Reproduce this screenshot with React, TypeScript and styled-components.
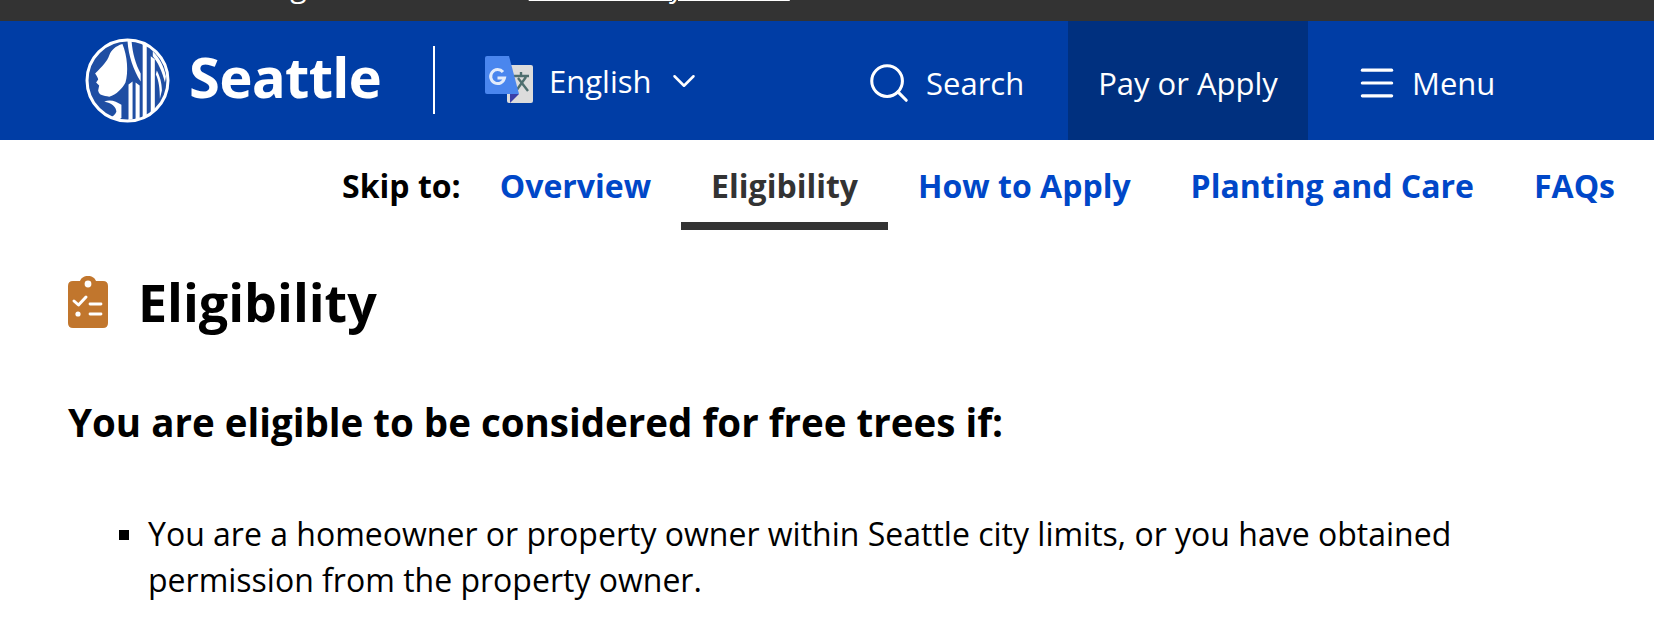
import React from 'react';
import styled, { createGlobalStyle } from 'styled-components';
import { Search, Menu, ChevronDown } from 'lucide-react';

const GlobalStyle = createGlobalStyle`
  html, body {
    margin: 0;
    padding: 0;
    background: #fff;
    overflow: hidden;
  }
  body {
    font-family: 'Open Sans', 'Noto Sans', sans-serif;
    color: #000;
  }
`;

const TopStrip = styled.div`
  height: 21px;
  background: #333;
  overflow: hidden;
  display: flex;
  align-items: flex-end;
  padding: 0 0 15px 194px;
  box-sizing: border-box;
  color: #fff;
  font-size: 30px;
  line-height: 40px;
  white-space: pre;
`;

const StripLink = styled.a`
  color: #fff;
  font-size: 28.5px;
  text-decoration: underline;
  text-decoration-thickness: 2px;
  text-underline-offset: 2px;
`;

const Header = styled.header`
  height: 119px;
  background: #003da5;
  display: flex;
  align-items: stretch;
  color: #fff;
`;

const Brand = styled.div`
  display: flex;
  align-items: center;
  padding-left: 85px;
  width: 435px;
  box-sizing: border-box;
`;

const BrandName = styled.span`
  font-family: 'Noto Sans', sans-serif;
  font-size: 56px;
  font-weight: 700;
  letter-spacing: -0.6px;
  margin-left: 19px;
  margin-top: -9px;
`;

const Divider = styled.span`
  width: 2px;
  height: 68px;
  background: #fff;
  margin-left: auto;
  margin-top: -2px;
`;

const Language = styled.div`
  display: flex;
  align-items: center;
  font-size: 31px;
  width: 435px;
  padding: 0 0 0 50px;
  box-sizing: border-box;
`;

const LanguageLabel = styled.span`
  margin-left: 16px;
  margin-right: 13px;
`;

const HeaderItem = styled.div`
  display: flex;
  align-items: center;
  font-size: 31px;
  padding-top: 5px;
  box-sizing: border-box;
`;

const SearchItem = styled(HeaderItem)`
  width: 198px;
  gap: 14px;
  margin-left: -4px;
`;

const PayItem = styled(HeaderItem)`
  width: 240px;
  justify-content: center;
  background: #00307f;
  margin-left: 4px;
`;

const MenuItem = styled(HeaderItem)`
  padding-left: 47px;
  gap: 13px;
`;

const SkipBar = styled.nav`
  height: 90px;
  display: flex;
  justify-content: flex-end;
  align-items: stretch;
  padding-right: 9px;
`;

const SkipLabel = styled.span`
  font-size: 32px;
  font-weight: 700;
  line-height: 91px;
  margin-right: 9px;
`;

const SkipLink = styled.a<{ $current?: boolean }>`
  display: block;
  font-size: 32px;
  font-weight: 700;
  padding: 0 30px;
  line-height: 91px;
  color: ${(p) => (p.$current ? '#333' : '#0047c8')};
  box-sizing: border-box;
  height: 90px;
  border-bottom: ${(p) => (p.$current ? '8px solid #333' : 'none')};
`;

const Content = styled.main`
  padding: 38px 0 0 68px;
`;

const TitleRow = styled.div`
  display: flex;
  align-items: center;
  gap: 30px;
`;

const Title = styled.h1`
  margin: 0;
  font-size: 52px;
  line-height: 68px;
  font-weight: 700;
`;

const Lead = styled.h2`
  margin: 61px 0 0;
  font-size: 38.5px;
  line-height: 50px;
  font-weight: 700;
`;

const Points = styled.ul`
  list-style: none;
  margin: 64px 0 0;
  padding: 0 0 0 80px;
  width: 1460px;
  box-sizing: border-box;
`;

const Point = styled.li`
  position: relative;
  font-size: 32px;
  line-height: 46px;

  &::before {
    content: '';
    position: absolute;
    left: -29px;
    top: 19px;
    width: 10px;
    height: 10px;
    background: #000;
  }
`;

const SealIcon = () => (
  <svg width="85" height="85" viewBox="0 0 84 84" aria-hidden="true">
    <circle cx="42" cy="42" r="40" fill="#1f4ea3" stroke="#fff" strokeWidth="3" />
    <path
      d="M37 6 C30 8 26 12 24 17 C22 23 17 28 10 35 C12 38 13 40 13 41 L11 44 L14 47 L13 52 C14 57 18 57 24 58 C31 56 37 50 40 44 C43 34 42 18 37 6 Z"
      fill="#fff"
    />
    <path d="M19 63 C26 64 31 68 31 73 C30 76 27 78 25 79 L33 81 L36 79 L36 66 C31 63 25 60 19 63 Z" fill="#fff" />
    <path d="M42 3 L46 3 C47 15 50 26 55 35 L55 43 C48 32 43 18 42 3 Z" fill="#fff" />
    <path d="M43 46 L47 43 L47 80 L43 81 Z M50 44 L54 47 L54 80 L50 80 Z" fill="#fff" />
    <path d="M57 6 L61 7 L61 78 L57 79 Z M65 18 L69 21 L69 72 L65 75 Z" fill="#fff" />
    <path d="M67 13 C74 20 78 28 80 38 L79 44 C76 32 72 24 67 18 Z M71 32 C74 38 76 44 76 52 L74 60 C74 50 73 42 70 36 Z" fill="#fff" />
  </svg>
);

const TranslateIcon = () => (
  <svg width="48" height="50" viewBox="0 0 48 50" aria-hidden="true">
    <rect x="22" y="9" width="26" height="38" rx="2" fill="#dcdcdc" />
    <path d="M29 20 L44 20 M36 16 L36 20 M31 35 L41 21 M33 22 L43 35" stroke="#4f6f6f" strokeWidth="2.4" fill="none" />
    <path d="M25 38 L34 38 L25 47 Z" fill="#3b3fa8" />
    <path d="M2 0 L24 0 L34 38 L2 38 Q0 38 0 36 L0 2 Q0 0 2 0 Z" fill="#4a86ee" />
    <path d="M18 16 A7 7 0 1 0 19.5 22 L12.5 22" stroke="#e3ecfb" strokeWidth="3" fill="none" />
  </svg>
);

const ClipboardIcon = () => (
  <svg width="40" height="52" viewBox="0 0 40 52" aria-hidden="true">
    <path
      d="M5 5 L12 5 C13 2 16 0 20 0 C24 0 27 2 28 5 L35 5 Q40 5 40 10 L40 47 Q40 52 35 52 L5 52 Q0 52 0 47 L0 10 Q0 5 5 5 Z"
      fill="#c1762d"
    />
    <circle cx="20" cy="8" r="3.4" fill="#fff" />
    <path d="M6 25 L10.5 29 L18 21" stroke="#fff" strokeWidth="3" fill="none" strokeLinecap="round" strokeLinejoin="round" />
    <path d="M22 28 L33 28 M22 38 L33 38" stroke="#fff" strokeWidth="2.8" strokeLinecap="round" />
    <circle cx="10" cy="38" r="2.6" fill="#fff" />
  </svg>
);

export default function App() {
  return (
    <>
      <GlobalStyle />
      <TopStrip>
        Reading the latest from <StripLink>Community Notices</StripLink>
      </TopStrip>
      <Header>
        <Brand>
          <SealIcon />
          <BrandName>Seattle</BrandName>
          <Divider />
        </Brand>
        <Language>
          <TranslateIcon />
          <LanguageLabel>English</LanguageLabel>
          <ChevronDown size={38} strokeWidth={1.6} />
        </Language>
        <SearchItem>
          <Search size={46} strokeWidth={1.6} />
          <span>Search</span>
        </SearchItem>
        <PayItem>Pay or Apply</PayItem>
        <MenuItem>
          <Menu size={44} strokeWidth={1.7} />
          <span>Menu</span>
        </MenuItem>
      </Header>
      <SkipBar>
        <SkipLabel>Skip to:</SkipLabel>
        <SkipLink>Overview</SkipLink>
        <SkipLink $current>Eligibility</SkipLink>
        <SkipLink>How to Apply</SkipLink>
        <SkipLink>Planting and Care</SkipLink>
        <SkipLink>FAQs</SkipLink>
      </SkipBar>
      <Content>
        <TitleRow>
          <ClipboardIcon />
          <Title>Eligibility</Title>
        </TitleRow>
        <Lead>You are eligible to be considered for free trees if:</Lead>
        <Points>
          <Point>
            You are a homeowner or property owner within Seattle city limits, or you have obtained permission from the
            property owner.
          </Point>
        </Points>
      </Content>
    </>
  );
}
